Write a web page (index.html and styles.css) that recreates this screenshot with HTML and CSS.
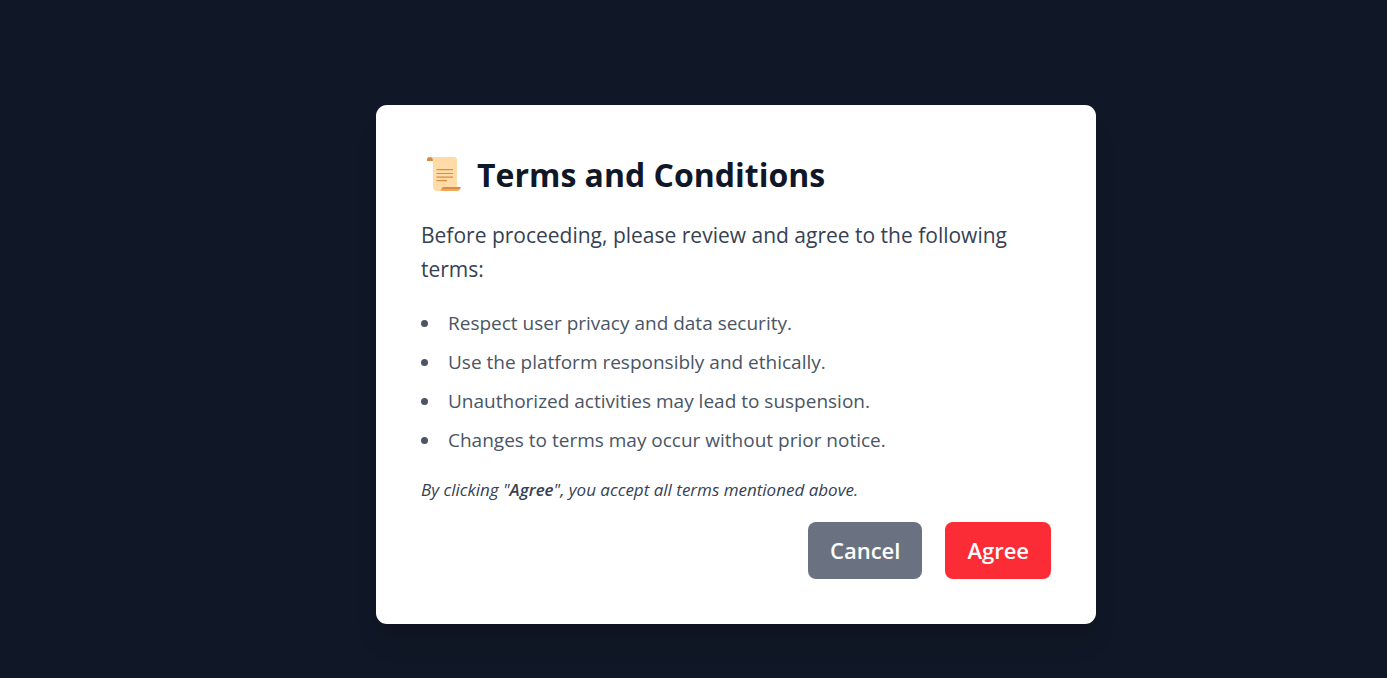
FILE: index.html
```html
<!DOCTYPE html>
<html lang="en">
<head>
<meta charset="utf-8">
<meta name="viewport" content="width=device-width, initial-scale=1">
<title>Terms and Conditions</title>
<link rel="stylesheet" href="styles.css">
</head>
<body>
<main class="page">
  <section class="card" aria-labelledby="title">
    <h1 class="title" id="title">
      <svg class="scroll" viewBox="0 0 48 48" aria-hidden="true">
        <path fill="#d68a45" d="M6 10V8.800Q6 6 9 6h4v4z"/>
        <path fill="#ffdca7" d="M9 6h24q3 0 3 3v27.500H24.500L19 40h-3q-4 0-4-4V10q0-3.500-3-4z"/>
        <path fill="#efa95c" d="M20.500 38q.5-2 2.500-2h16.500q0 4-3.500 4H18q2 0 2.500-2z"/>
        <path fill="#d98c43" d="M23 36h16.500q0 2-1.500 2H20.500q.5-2 2.500-2z"/>
        <path fill="none" stroke="#d98c43" stroke-width="1.200" d="M15.500 18.700H32M15.500 22.500H32M15.500 26.200H32M15.500 29.700H26"/>
      </svg>
      <span>Terms and Conditions</span>
    </h1>
    <p class="intro">Before proceeding, please review and agree to the following terms:</p>
    <ul class="terms">
      <li class="term">Respect user privacy and data security.</li>
      <li class="term">Use the platform responsibly and ethically.</li>
      <li class="term">Unauthorized activities may lead to suspension.</li>
      <li class="term">Changes to terms may occur without prior notice.</li>
    </ul>
    <p class="note">By clicking "<strong class="strong">Agree</strong>", you accept all terms mentioned above.</p>
    <div class="actions">
      <button class="button button-cancel" type="button">Cancel</button>
      <button class="button button-agree" type="button">Agree</button>
    </div>
  </section>
</main>
</body>
</html>
```
FILE: styles.css
```css
* { box-sizing: border-box; }

body {
  margin: 0;
  background: #101726;
  font-family: "Segoe UI", "Open Sans", "Noto Sans", sans-serif;
}

.page {
  display: flex;
  align-items: center;
  justify-content: center;
  min-height: 100vh;
  padding: 51px 0 0 85px;
}

.card {
  width: 100%;
  max-width: 720px;
  padding: 45px;
  border-radius: 11px;
  background: #fff;
  box-shadow: 0 22px 28px -6px rgb(0 0 0 / 10%), 0 9px 11px -7px rgb(0 0 0 / 10%);
}

.title {
  display: flex;
  align-items: center;
  gap: 8px;
  margin: 0 0 18px;
  color: #101828;
  font-size: 32px;
  font-weight: 700;
  line-height: 50px;
}

.scroll {
  width: 48px;
  height: 48px;
}

.intro {
  margin: 0 0 22px;
  color: #364153;
  font-size: 21px;
  line-height: 34px;
}

.terms {
  display: grid;
  gap: 9px;
  margin: 0 0 21px;
  padding: 0;
  list-style: none;
}

.term {
  display: flex;
  align-items: center;
  gap: 20px;
  color: #4a5565;
  font-size: 19px;
  line-height: 30px;
}

.term::before {
  width: 7px;
  height: 7px;
  border-radius: 50%;
  background: #4a5565;
  content: "";
}

.note {
  margin: 0 0 18px;
  color: #364153;
  font-size: 17px;
  font-style: italic;
  line-height: 28px;
}

.strong { font-weight: 600; }

.actions {
  display: flex;
  justify-content: flex-end;
  gap: 23px;
}

.button {
  padding: 11px 22px;
  border: 0;
  border-radius: 8px;
  color: #fff;
  font: 600 22px/35px "Segoe UI", "Open Sans", "Noto Sans", sans-serif;
  cursor: pointer;
}

.button-cancel { background: #6a7282; }
.button-agree { background: #fb2c36; }
```
